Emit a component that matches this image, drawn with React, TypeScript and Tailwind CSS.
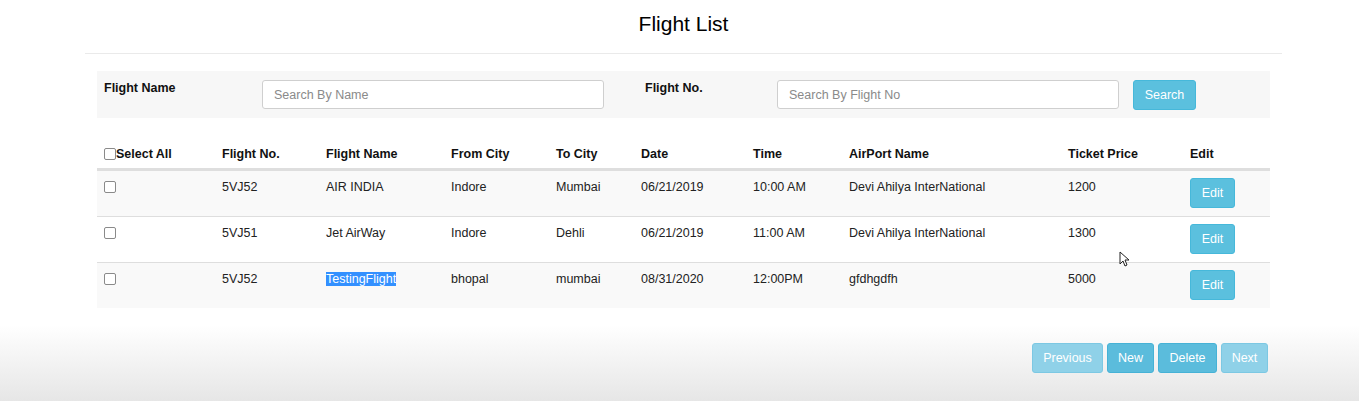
import React from "react";

const cols = "grid grid-cols-[118px_104px_125px_105px_85px_112px_96px_219px_122px_87px]";

const rows = [
  { no: "5VJ52", name: "AIR INDIA", from: "Indore", to: "Mumbai", date: "06/21/2019", time: "10:00 AM", airport: "Devi Ahilya InterNational", price: "1200", sel: false },
  { no: "5VJ51", name: "Jet AirWay", from: "Indore", to: "Dehli", date: "06/21/2019", time: "11:00 AM", airport: "Devi Ahilya InterNational", price: "1300", sel: false },
  { no: "5VJ52", name: "TestingFlight", from: "bhopal", to: "mumbai", date: "08/31/2020", time: "12:00PM", airport: "gfdhgdfh", price: "5000", sel: true },
];

function Check() {
  return <span className="inline-block w-[12px] h-[12px] border border-[#8a8a8a] rounded-[2px] bg-white" />;
}

export default function App() {
  return (
    <div
      className="relative w-full h-[401px] overflow-hidden bg-[linear-gradient(to_bottom,#ffffff_0%,#ffffff_81%,#e6e6e6_100%)] text-[#222] text-[12.5px] leading-[18px]"
      style={{ fontFamily: '"Liberation Sans", Arial, sans-serif' }}
    >
      <div className="ml-[85px] w-[1197px]">
        <h1 className="text-[21px] leading-[24px] text-center text-black pt-[12px] pb-[17px] font-normal">Flight List</h1>
        <div className="h-px bg-[#eaeaea]" />
        <div className="px-[12px]">
          <div className="mt-[17px] bg-[#f7f7f7] pt-[9px] pl-[7px] flex items-start h-[47px]">
            <div className="w-[158px] font-bold text-[#111] leading-[16px]">Flight Name</div>
            <input
              className="w-[342px] h-[29px] border border-[#cfcfcf] rounded-[3px] bg-white px-[11px] text-[12.5px] placeholder:text-[#8a8a8a] outline-none"
              placeholder="Search By Name"
              style={{ fontFamily: '"Liberation Sans", Arial, sans-serif' }}
            />
            <div className="w-[173px] pl-[41px] font-bold text-[#111] leading-[16px]">Flight No.</div>
            <input
              className="w-[342px] h-[29px] border border-[#cfcfcf] rounded-[3px] bg-white px-[11px] text-[12.5px] placeholder:text-[#8a8a8a] outline-none"
              placeholder="Search By Flight No"
              style={{ fontFamily: '"Liberation Sans", Arial, sans-serif' }}
            />
            <button className="ml-[14px] w-[63px] h-[30px] rounded-[3px] bg-[#5bc0de] border border-[#46b8da] text-white text-[12.5px]">
              Search
            </button>
          </div>

          <div className="mt-[20px]">
            <div className={`${cols} font-bold text-[#111] border-b-2 border-[#dedede]`}>
              <div className="pl-[7px] pt-[7px] pb-[5px] flex items-center">
                <Check />
                <span>Select All</span>
              </div>
              {["Flight No.", "Flight Name", "From City", "To City", "Date", "Time", "AirPort Name", "Ticket Price", "Edit"].map((h) => (
                <div key={h} className="pl-[7px] pt-[7px] pb-[5px]">{h}</div>
              ))}
            </div>
            {rows.map((r, i) => (
              <div key={i} className={`${cols} border-t border-[#dedede] first:border-t-0 ${i % 2 === 0 ? "bg-[#f9f9f9]" : "bg-white"}`}>
                <div className="pl-[7px] pt-[10px] pb-[8px] flex items-start"><Check /></div>
                <div className="pl-[7px] pt-[7px] pb-[8px]">{r.no}</div>
                <div className="pl-[7px] pt-[7px] pb-[8px]">
                  {r.sel ? <span className="bg-[#3390ff] text-white">{r.name}</span> : r.name}
                </div>
                <div className="pl-[7px] pt-[7px] pb-[8px]">{r.from}</div>
                <div className="pl-[7px] pt-[7px] pb-[8px]">{r.to}</div>
                <div className="pl-[7px] pt-[7px] pb-[8px]">{r.date}</div>
                <div className="pl-[7px] pt-[7px] pb-[8px]">{r.time}</div>
                <div className="pl-[7px] pt-[7px] pb-[8px]">{r.airport}</div>
                <div className="pl-[7px] pt-[7px] pb-[8px]">{r.price}</div>
                <div className="pl-[7px] pt-[7px] pb-[8px]">
                  <button className="w-[45px] h-[30px] rounded-[3px] bg-[#5bc0de] border border-[#46b8da] text-white text-[12.5px]">Edit</button>
                </div>
              </div>
            ))}
          </div>

          <div className="mt-[35px] flex justify-end gap-[4px] pr-[2px]">
            <button className="w-[71px] h-[30px] rounded-[3px] bg-[#8fd1e8] border border-[#7cc8e3] text-white text-[12.5px]">Previous</button>
            <button className="w-[47px] h-[30px] rounded-[3px] bg-[#5bbcdc] border border-[#46b2d6] text-white text-[12.5px]">New</button>
            <button className="w-[59px] h-[30px] rounded-[3px] bg-[#5bbcdc] border border-[#46b2d6] text-white text-[12.5px]">Delete</button>
            <button className="w-[47px] h-[30px] rounded-[3px] bg-[#8fd1e8] border border-[#7cc8e3] text-white text-[12.5px]">Next</button>
          </div>
        </div>
      </div>

      <svg className="absolute left-[1119px] top-[251px]" width="11" height="16" viewBox="0 0 11 16">
        <path d="M1 1 L1 13 L4 10 L6 15 L8 14 L6 9 L10 9 Z" fill="#fff" stroke="#222" strokeWidth="1" strokeLinejoin="round" />
      </svg>
    </div>
  );
}
